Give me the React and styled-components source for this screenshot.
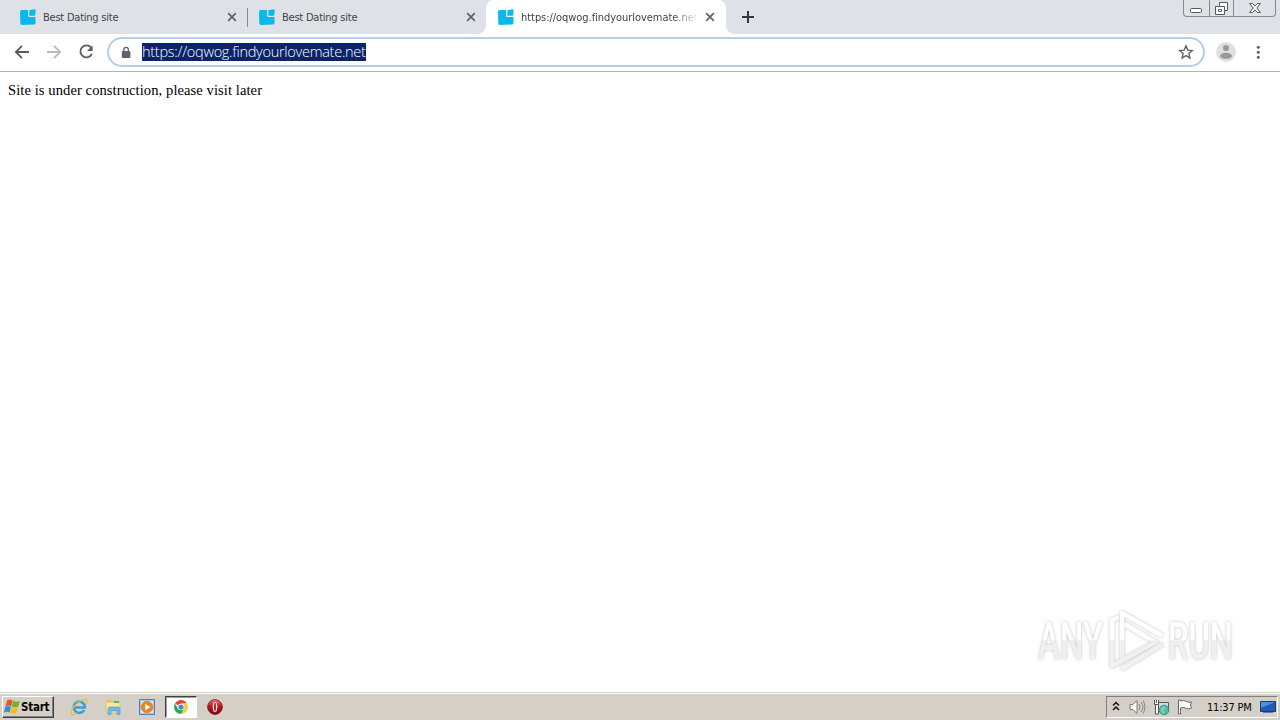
import React from "react";
import styled, { createGlobalStyle, css } from "styled-components";

const Global = createGlobalStyle`
  html, body { margin: 0; padding: 0; background: #fff; overflow: hidden; }
  * { box-sizing: border-box; }
  svg { display: block; flex: none; }
`;

const ui = css`
  font-family: "DejaVu Sans Condensed", "DejaVu Sans", sans-serif;
  font-stretch: condensed;
`;

const Screen = styled.div`
  width: 1280px;
  height: 720px;
  display: flex;
  flex-direction: column;
  background: #fff;
`;

const TabStrip = styled.div`
  height: 34px;
  flex: none;
  display: flex;
  align-items: stretch;
  padding-left: 8px;
  background: #dee1e6;
`;

const Tab = styled.div`
  position: relative;
  width: 239px;
  height: 34px;
  flex: none;
  display: flex;
  align-items: center;
  padding: 0 10px 0 12px;
  border-radius: 8px 8px 0 0;
  background: ${(p) => (p.$active ? "#fff" : "transparent")};
  ${(p) => p.$active && css`
    width: 240px;
    padding-right: 11px;
    &::before, &::after {
      content: "";
      position: absolute;
      bottom: 0;
      width: 8px;
      height: 8px;
    }
    &::before { left: -8px; background: radial-gradient(circle at 0 0, transparent 7.5px, #fff 8px); }
    &::after { right: -8px; background: radial-gradient(circle at 100% 0, transparent 7.5px, #fff 8px); }
  `}
  ${(p) => p.$divider && css`
    &::after {
      content: "";
      position: absolute;
      right: -1px;
      top: 8px;
      width: 1px;
      height: 19px;
      background: #85888d;
    }
  `}
`;

const TabTitle = styled.span`
  ${ui}
  flex: none;
  width: 176px;
  margin-left: 7px;
  padding-top: 1px;
  overflow: hidden;
  white-space: nowrap;
  font-size: 11px;
  line-height: 16px;
  letter-spacing: ${(p) => p.$tracking || "0"};
  color: #3f4247;
  ${(p) => p.$fade && css`
    mask-image: linear-gradient(to right, #000 152px, transparent 178px);
  `}
`;

const TabClose = styled.span`
  margin-left: auto;
`;

const NewTab = styled.div`
  width: 28px;
  margin-left: 8px;
  display: flex;
  align-items: center;
  justify-content: center;
`;

const WindowControls = styled.div`
  display: flex;
  width: 93px;
  height: 17px;
  margin-left: auto;
  margin-right: 4px;
  border: 1px solid #868a91;
  border-top: 0;
  border-radius: 0 0 4px 4px;
`;

const WindowButton = styled.div`
  width: ${(p) => p.$width}px;
  display: flex;
  align-items: center;
  justify-content: center;
  & + & { border-left: 1px solid #868a91; }
`;

const Toolbar = styled.div`
  height: 38px;
  flex: none;
  display: flex;
  align-items: center;
  padding: 0 12px 1px;
  border-bottom: 1px solid #b0b1b3;
`;

const NavButton = styled.div`
  width: 20px;
  height: 20px;
  margin-right: 12px;
  display: flex;
  align-items: center;
  justify-content: center;
`;

const AddressBar = styled.div`
  width: 1098px;
  height: 30px;
  margin-left: -1px;
  display: flex;
  align-items: center;
  padding: 0 9px 0 10px;
  border: 2px solid #b8cdec;
  border-radius: 15px;
  background: #fff;
`;

const Url = styled.span`
  width: 224px;
  height: 18px;
  margin-left: 10px;
  white-space: nowrap;
  background: #0a246a;
  color: #fff;
  font: 300 14.5px/18px "Open Sans", "Noto Sans", sans-serif;
  letter-spacing: -0.27px;
`;

const StarSlot = styled.span`
  margin-left: auto;
`;

const Avatar = styled.div`
  margin: 0 17px 0 11px;
`;

const Page = styled.main`
  position: relative;
  flex: 1;
  padding: 9px 8px;
  font: 14.6px/18px "Liberation Serif", serif;
  letter-spacing: 0.07px;
  color: #000;
`;

const Message = styled.p`
  margin: 0;
  white-space: nowrap;
`;

const Watermark = styled.svg`
  position: absolute;
  right: 32px;
  bottom: 12px;
  overflow: visible;
  letter-spacing: 0;
  filter: drop-shadow(0 0 1.8px rgba(0, 0, 0, 0.25));
`;

const Taskbar = styled.footer`
  height: 28px;
  flex: none;
  display: flex;
  align-items: center;
  padding: 1px 2px 0;
  border-top: 1px solid #d4d0c8;
  box-shadow: inset 0 1px #fff;
  background: #d4d0c8;
`;

const StartButton = styled.div`
  width: 52px;
  height: 22px;
  display: flex;
  align-items: center;
  padding-left: 1px;
  border: 1px solid;
  border-color: #fff #404040 #404040 #fff;
  box-shadow: inset -1px -1px #808080;
  color: #000;
  white-space: nowrap;
  font: bold 11.5px/18px "DejaVu Sans Condensed", "DejaVu Sans", sans-serif;
  font-stretch: condensed;
  letter-spacing: -0.25px;
`;

const QuickLaunch = styled.div`
  display: flex;
  margin-left: 9px;
`;

const Launcher = styled.div`
  width: 32px;
  height: 22px;
  margin-right: 2px;
  display: flex;
  align-items: center;
  justify-content: center;
  border: 1px solid transparent;
  ${(p) => p.$active && css`
    background: #fff;
    border-color: #404040 #fff #fff #404040;
    box-shadow: inset 1px 1px #a09e99;
  `}
`;

const Tray = styled.div`
  width: 172px;
  height: 22px;
  margin-left: auto;
  display: flex;
  align-items: center;
  border: 1px solid;
  border-color: #808080 #fff #fff #808080;
  padding-left: 5px;
`;

const TrayIcon = styled.span`
  margin-right: ${(p) => p.$gap}px;
`;

const Clock = styled.span`
  ${ui}
  width: 46px;
  margin-right: 7px;
  white-space: nowrap;
  color: #000;
  font-size: 11px;
  line-height: 18px;
  padding-top: 1px;
  letter-spacing: -0.2px;
`;

const Favicon = () => (
  <svg width="16" height="16" viewBox="0 0 16 16">
    <path d="M2 1h6v5.5q0 1.5 1.5 1.5H15.5v6q0 1.5-1.5 1.5L2 16Q.4 16 .3 14L0 3q0-2 2-2z" fill="#0bb9e8" />
    <path d="m9.5 1.2 5-.9q1.2 0 1.2 1.2L15.2 6q0 .8-1 .8H10q-.8 0-.8-.8z" fill="#0bb9e8" />
  </svg>
);

const CloseIcon = () => (
  <svg width="10" height="10" viewBox="0 0 10 10">
    <path d="m1.2 1.2 7.6 7.6m0-7.6L1.2 8.8" stroke="#5f6368" strokeWidth="1.7" />
  </svg>
);

const Arrow = ({ flip, color }) => (
  <svg width="16" height="16" viewBox="0 0 16 16">
    <path d={flip ? "M1 8h13M8 1.8 14.2 8 8 14.2" : "M15 8H2M8 1.8 1.8 8 8 14.2"} fill="none" stroke={color} strokeWidth="1.8" />
  </svg>
);

const tabs = [
  { title: "Best Dating site", divider: true, tracking: "-0.23px" },
  { title: "Best Dating site", tracking: "-0.23px" },
  { title: "https://oqwog.findyourlovemate.net", active: true, tracking: "-0.05px" },
];

const IE = () => (
  <svg width="18" height="18" viewBox="0 0 18 18">
    <path d="M14.2 12A5.6 5.6 0 1 1 14.9 9.6H4.6" fill="none" stroke="#359fdd" strokeWidth="2.5" />
    <path d="M1.5 16.5C-1 12 9 2 15 1.3c3 0 2 3 .7 4.4M1.5 16.5c1.5 1 4-.5 5.5-1.7" fill="none" stroke="#e9bc32" strokeWidth="1.3" />
  </svg>
);

const Folder = () => (
  <svg width="17" height="16" viewBox="0 0 17 16">
    <path d="M1 1h5l1 2h7v3H1z" fill="#e5c453" />
    <path d="M2 3h11l2 2v9H1V4z" fill="#f8e89c" stroke="#d8b95b" strokeWidth=".7" />
    <path d="M9 2h5v2H9z" fill="#62b15b" />
    <path d="M3 15.5V10q0-2 2-2h8q2 0 2 2v5.5h-3V12H6v3.5z" fill="#75b8e5" stroke="#4d94c4" strokeWidth=".6" />
  </svg>
);

const Player = () => (
  <svg width="16" height="16" viewBox="0 0 16 16">
    <path d="M.5.5h15v15H.5z" fill="#9acaf0" stroke="#4b83b8" />
    <path d="M2 2h12v12H2z" fill="#d7ecfa" />
    <circle cx="8" cy="8" r="5.8" fill="#ef8617" stroke="#d56a0d" strokeWidth=".6" />
    <path d="m6.2 4.8 5 3.2-5 3.2z" fill="#fff" />
  </svg>
);

const Chrome = () => (
  <svg width="14" height="14" viewBox="0 0 16 16">
    <path d="M8 8 1.1 4A8 8 0 0 1 14.9 4H8z" fill="#df4636" />
    <path d="M8 8V4h6.9A8 8 0 0 1 8 16l3.5-6z" fill="#f9cc3c" />
    <path d="M8 8l3.5 2L8 16A8 8 0 0 1 1.1 4l3.4 6z" fill="#36a257" />
    <circle cx="8" cy="8" r="3.8" fill="#fff" />
    <circle cx="8" cy="8" r="3" fill="#458bdc" />
  </svg>
);

const Opera = () => (
  <svg width="16" height="16" viewBox="0 0 16 16">
    <defs><linearGradient id="opera" x2="0" y2="1"><stop stopColor="#ef7474" /><stop offset=".45" stopColor="#bd1722" /><stop offset="1" stopColor="#790810" /></linearGradient></defs>
    <circle cx="8" cy="8" r="7.4" fill="url(#opera)" stroke="#7c1719" strokeWidth=".8" />
    <ellipse cx="8" cy="8" rx="2.3" ry="5.2" fill="#f5e6e6" />
    <ellipse cx="8" cy="8" rx="1" ry="4.4" fill="#b52a32" />
  </svg>
);

const WindowsFlag = () => (
  <svg width="17" height="16" viewBox="0 0 17 16">
    <path d="M3.2 1.2q3-1.4 5.5.2L7.3 7.2Q4.5 5.8 1.5 7z" fill="#e85a20" />
    <path d="M9.2 1.8Q12 3.4 16 1.7L14.3 7.4Q11 8.9 7.9 7.5z" fill="#69b52d" />
    <path d="M1.3 7.6Q4 6.4 7.1 7.8l-1.5 5.8Q3 12.2 0 13.4z" fill="#358cd5" />
    <path d="M7.7 8.1q3 1.2 6.3-.1l-1.6 5.8q-3 1.2-6.2 0z" fill="#f6ba20" />
  </svg>
);

const launchers = [{ icon: IE }, { icon: Folder }, { icon: Player }, { icon: Chrome, active: true }, { icon: Opera }];

export default function App() {
  return (
    <>
      <Global />
      <Screen>
        <TabStrip>
          {tabs.map((tab, i) => (
            <Tab key={i} $active={tab.active} $divider={tab.divider}>
              <Favicon />
              <TabTitle $fade={tab.active} $tracking={tab.tracking}>{tab.title}</TabTitle>
              <TabClose><CloseIcon /></TabClose>
            </Tab>
          ))}
          <NewTab>
            <svg width="12" height="12" viewBox="0 0 12 12"><path d="M6 0v12M0 6h12" stroke="#34373d" strokeWidth="2" /></svg>
          </NewTab>
          <WindowControls>
            <WindowButton $width={25}>
              <svg width="12" height="16" viewBox="0 0 12 16"><rect x=".5" y="8.5" width="11" height="4" rx="1" fill="#fff" stroke="#555861" /></svg>
            </WindowButton>
            <WindowButton $width={25}>
              <svg width="13" height="16" viewBox="0 0 13 16"><path d="M4.5 2.5h8v8h-3v4h-9v-8h4z" fill="#fff" stroke="#555861" /><path d="M4.5 6.5h5v4M3.5 9.5h3v2h-3z" fill="none" stroke="#555861" /></svg>
            </WindowButton>
            <WindowButton $width={42}>
              <svg width="12" height="16" viewBox="0 0 12 16"><path d="M.7 3.5h3L6 6l2.3-2.5h3L7.9 8l3.4 4.5h-3L6 10l-2.3 2.5h-3L4.1 8z" fill="#fff" stroke="#555861" /></svg>
            </WindowButton>
          </WindowControls>
        </TabStrip>
        <Toolbar>
          <NavButton><Arrow color="#5a5c60" /></NavButton>
          <NavButton><Arrow flip color="#b9babb" /></NavButton>
          <NavButton>
            <svg width="16" height="16" viewBox="0 0 16 16"><path d="M13 3.4A6 6 0 1 0 13.8 10" fill="none" stroke="#5a5c60" strokeWidth="1.8" /><path d="M14.6 1.4V7H9z" fill="#5a5c60" /></svg>
          </NavButton>
          <AddressBar>
            <svg width="13" height="13" viewBox="0 0 13 13"><path d="M4.8 6V3.7a2.3 2.3 0 0 1 4.6 0V6" fill="none" stroke="#5f6368" strokeWidth="1.3" /><rect x="2.8" y="5" width="8.6" height="7" rx="1" fill="#5f6368" /></svg>
            <Url>https://oqwog.findyourlovemate.net</Url>
            <StarSlot>
              <svg width="16" height="16" viewBox="0 0 16 16"><path d="m8 1.9 1.8 4.2 4.5.4-3.4 3 1 4.5L8 11.6 4.1 14l1-4.5-3.4-3 4.5-.4z" fill="none" stroke="#5f6368" strokeWidth="1.4" /></svg>
            </StarSlot>
          </AddressBar>
          <Avatar>
            <svg width="20" height="20" viewBox="0 0 20 20"><circle cx="10" cy="10" r="10" fill="#dfdfdf" /><circle cx="10" cy="6" r="3" fill="#999" /><ellipse cx="10" cy="13.8" rx="6" ry="3" fill="#999" /></svg>
          </Avatar>
          <svg width="10" height="16" viewBox="0 0 10 16"><g fill="#5f6368"><circle cx="5.3" cy="3.3" r="1.5" /><circle cx="5.3" cy="8.3" r="1.5" /><circle cx="5.3" cy="13.3" r="1.5" /></g></svg>
        </Toolbar>
        <Page>
          <Message>Site is under construction, please visit later</Message>
          <Watermark width="220" height="80" viewBox="1028 600 220 80">
            <defs>
              <linearGradient id="mark" gradientUnits="userSpaceOnUse" x1="0" x2="0" y1="609" y2="671"><stop offset="0" stopColor="#fff" /><stop offset=".5" stopColor="#fff" /><stop offset=".51" stopColor="#efefef" /><stop offset="1" stopColor="#f2f2f2" /></linearGradient>
            </defs>
            <g fill="url(#mark)" fontFamily="Roboto, sans-serif" fontSize="51" fontWeight="500">
              <text x="1038" y="659" textLength="65" lengthAdjust="spacingAndGlyphs">ANY</text>
              <text x="1168" y="659" textLength="65" lengthAdjust="spacingAndGlyphs">RUN</text>
            </g>
            <g fill="none" stroke="url(#mark)" strokeWidth="4.5" strokeLinejoin="round" strokeLinecap="round">
              <path d="M1122 657v-44l39 22" />
              <path d="M1126 625l29 17" />
              <path d="M1117 618l-5 2v46l44-24M1161 645l-38 23" />
            </g>
          </Watermark>
        </Page>
        <Taskbar>
          <StartButton><WindowsFlag />Start</StartButton>
          <QuickLaunch>
            {launchers.map(({ icon: Icon, active }, i) => <Launcher key={i} $active={active}><Icon /></Launcher>)}
          </QuickLaunch>
          <Tray>
            <TrayIcon $gap={9}><svg width="8" height="12" viewBox="0 0 8 12"><path d="m1 4.5 3-3 3 3M1 9l3-3 3 3" fill="none" stroke="#111" strokeWidth="1.5" /></svg></TrayIcon>
            <TrayIcon $gap={7}><svg width="17" height="16" viewBox="0 0 17 16"><path d="M1 5.5h3l4-4v13l-4-4H1z" fill="#fff" stroke="#777" /><path d="M10 5q2 3 0 6M12 3q4 5 0 10M14 1.5q4 6.5 0 13" fill="none" stroke="#888" /></svg></TrayIcon>
            <TrayIcon $gap={7}><svg width="17" height="17" viewBox="0 0 17 17"><path d="M5.5 3.5h10v9h-10z" fill="#c9dddf" stroke="#505958" /><path d="M1.5 1v4.5h4V1M3.5 1v3M2.5 6v9h3V6" fill="#fff" stroke="#555" /><circle cx="11" cy="11" r="4.8" fill="#4eb7b0" stroke="#397e87" strokeWidth=".7" /><path d="m8 9 3-2 2 2-3 2 2 2-2 2-2-3z" fill="#8ad19c" /></svg></TrayIcon>
            <TrayIcon $gap={14}><svg width="16" height="16" viewBox="0 0 16 16"><path d="M1.5 1v14h2V9q3-1 5 0 3 2 6 0l-1-3 1-3q-3 1-6-1-2-1-5 0V1z" fill="#fff" stroke="#666" /></svg></TrayIcon>
            <Clock>11:37 PM</Clock>
            <svg width="16" height="14" viewBox="0 0 16 14"><path d="M.5 1.5h15v10H.5z" fill="#245aaf" stroke="#143e79" /><path d="M1 2h14L1 8z" fill="#4b91dd" /><path d="M3 12.5h10" stroke="#5783bc" /></svg>
          </Tray>
        </Taskbar>
      </Screen>
    </>
  );
}
